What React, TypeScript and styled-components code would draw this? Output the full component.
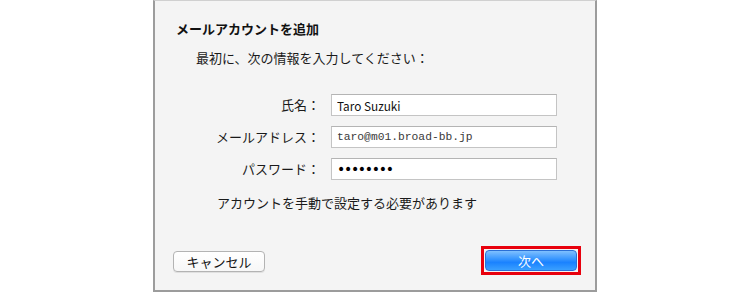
import styled, { createGlobalStyle } from "styled-components";

const GlobalStyle = createGlobalStyle`
  html, body {
    margin: 0;
    padding: 0;
    background: #ffffff;
  }
  body {
    font-family: "Noto Sans CJK JP", "Liberation Sans", sans-serif;
    color: #1a1a1a;
  }
`

const Page = styled.div`
  width: 750px;
  height: 292px;
  display: flex;
  justify-content: flex-start;
`

const Sheet = styled.div`
  box-sizing: border-box;
  margin-left: 153px;
  width: 444px;
  height: 292px;
  display: flex;
  flex-direction: column;
  background: #f4f4f4;
  border-top: 1px solid #d0d0d0;
  border-left: 2px solid #9c9c9c;
  border-right: 2px solid #9c9c9c;
  border-bottom: 2px solid #9c9c9c;
  padding: 19px 18px 18px 21px;
`

const Title = styled.h1`
  margin: 0;
  font-size: 13px;
  line-height: 18px;
  font-weight: bold;
  color: #111;
`

const Lead = styled.p`
  margin: 11px 0 0 20px;
  font-size: 13px;
  line-height: 18px;
`

const Form = styled.div`
  display: grid;
  grid-template-columns: 144px 226px;
  column-gap: 11px;
  row-gap: 10px;
  margin-top: 27px;
  align-items: center;
`

const Label = styled.label`
  justify-self: end;
  font-size: 13px;
  line-height: 18px;
  white-space: nowrap;
`

const Field = styled.input<{ $mono?: boolean }>`
  box-sizing: border-box;
  width: 226px;
  height: 22px;
  margin: 0;
  padding: 0 5px;
  background: #fff;
  border: 1px solid #c4c4c4;
  border-top-color: #b4b4b4;
  border-radius: 0;
  outline: none;
  color: ${(p) => (p.$mono ? "#3a3a3a" : "#111")};
  font-family: ${(p) =>
    p.$mono ? `"Liberation Mono", monospace` : `"Noto Sans CJK JP", sans-serif`};
  font-size: ${(p) => (p.$mono ? "11.3px" : "11.8px")};
`

const Secret = styled(Field)`
  font-family: "DejaVu Sans", sans-serif;
  font-size: 14px;
  letter-spacing: -1.3px;
  color: #000;
`

const Note = styled.p`
  margin: 14px 0 0 41px;
  font-size: 13px;
  line-height: 18px;
`

const Footer = styled.div`
  margin-top: auto;
  display: flex;
  justify-content: space-between;
  align-items: center;
`

const Button = styled.button<{ $primary?: boolean }>`
  box-sizing: border-box;
  width: 92px;
  height: 21px;
  margin: 0;
  padding: 0;
  border-radius: 4px;
  font-family: "Noto Sans CJK JP", sans-serif;
  font-size: 13px;
  line-height: 19px;
  border: 1px solid ${(p) => (p.$primary ? "#2a6fd6" : "#b3b3b3")};
  color: ${(p) => (p.$primary ? "#fff" : "#111")};
  background: ${(p) =>
    p.$primary
      ? "linear-gradient(#7fc0ff 0%, #3b98ff 40%, #1a82ff 60%, #3aa0ff 100%)"
      : "linear-gradient(#ffffff, #f7f7f7)"};
  box-shadow: ${(p) => (p.$primary ? "none" : "0 1px 0 rgba(0,0,0,0.08)")};
`

const Highlight = styled.div`
  display: flex;
  outline: 3px solid #e8000d;
  outline-offset: 1px;
`

const CancelWrap = styled.div`
  margin-left: -3px;
`

export default function App() {
  return (
    <Page>
      <GlobalStyle />
      <Sheet>
        <Title>メールアカウントを追加</Title>
        <Lead>最初に、次の情報を入力してください：</Lead>
        <Form>
          <Label>氏名：</Label>
          <Field readOnly value="Taro Suzuki" />
          <Label>メールアドレス：</Label>
          <Field readOnly $mono value="taro@m01.broad-bb.jp" />
          <Label>パスワード：</Label>
          <Secret readOnly type="password" value="password" />
        </Form>
        <Note>アカウントを手動で設定する必要があります</Note>
        <Footer>
          <CancelWrap>
            <Button>キャンセル</Button>
          </CancelWrap>
          <Highlight>
            <Button $primary>次へ</Button>
          </Highlight>
        </Footer>
      </Sheet>
    </Page>
  );
}
